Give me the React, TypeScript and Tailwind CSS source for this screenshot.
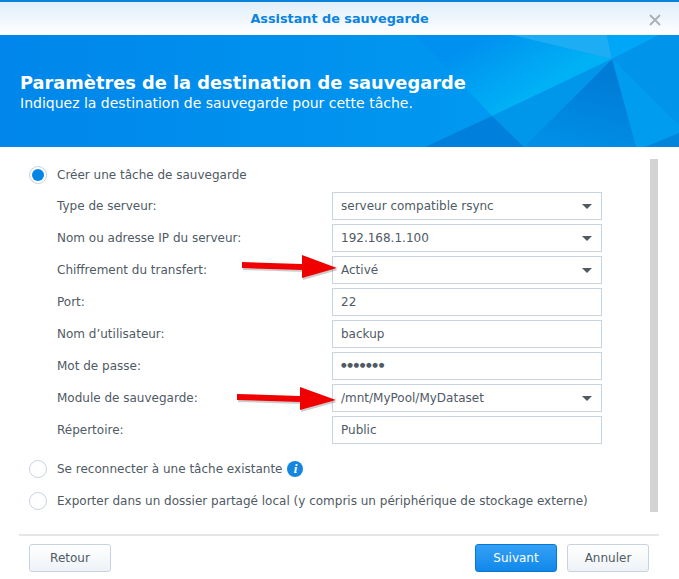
const font = { fontFamily: '"DejaVu Sans", sans-serif' };

const Radio = ({ checked = false }: { checked?: boolean }) => (
  <span className="flex h-[18px] w-[18px] shrink-0 items-center justify-center rounded-full border border-[#c8d3e0] bg-white">
    {checked && <span className="h-3 w-3 rounded-full bg-[#0086e5]" />}
  </span>
);

const Field = ({ label, value, select = false, password = false }: { label: string; value: string; select?: boolean; password?: boolean }) => (
  <div className="flex h-7 items-center">
    <span className="w-[275px] shrink-0 text-[#505a64]">{label}</span>
    <div className="flex h-7 w-[270px] items-center justify-between border border-[#c7d3e0] bg-white pl-2 pr-[9px] text-[#505a64]">
      <span className={password ? 'text-[6.5px] tracking-[0.6px]' : ''}>{value}</span>
      {select && <span className="h-0 w-0 border-x-[5px] border-t-[5px] border-x-transparent border-t-[#505a64]" />}
    </div>
  </div>
);

// base = x of the head's back edge, tip = x of the point
const Arrow = ({ className, base, tip }: { className: string; base: number; tip: number }) => {
  const d = `M0 8 L${base} 10 L${base} 1 L${tip} 14 L${base} 24 L${base} 16 L0 14 Z`;
  return (
    <svg className={className} width="105" height="30" viewBox="0 0 105 30">
      <path d={d} fill="#000" opacity="0.2" transform="translate(1 2)" />
      <path d={d} fill="#f00000" />
    </svg>
  );
};

const HeaderArt = () => (
  <svg className="absolute inset-0" width="679" height="112" viewBox="0 35 679 112">
    <defs>
      <linearGradient id="base" x1="0" x2="1" y1="0" y2="0">
        <stop offset="0" stopColor="#0086ea" />
        <stop offset="0.7" stopColor="#0098f0" />
      </linearGradient>
      <linearGradient id="band" gradientUnits="userSpaceOnUse" x1="465" y1="45" x2="505" y2="112">
        <stop offset="0" stopColor="#0090f0" />
        <stop offset="1" stopColor="#00b2f5" />
      </linearGradient>
      <linearGradient id="dark" gradientUnits="userSpaceOnUse" x1="600" y1="75" x2="580" y2="147">
        <stop offset="0" stopColor="#007cd6" />
        <stop offset="1" stopColor="#008ee6" />
      </linearGradient>
    </defs>
    <rect x="0" y="35" width="679" height="112" fill="url(#base)" />
    <polygon points="415,35 512,35 612,59 492,116" fill="url(#band)" />
    <polygon points="512,35 607,35 612,59" fill="#1cadf5" />
    <polygon points="607,35 659,35 612,59" fill="#00a6f8" />
    <polygon points="659,35 679,35 679,125 612,59" fill="#0094ea" />
    <polygon points="612,59 679,125 679,133 645,147 636,147" fill="#009cf0" />
    <polygon points="612,59 636,147 524,147" fill="url(#dark)" />
    <polygon points="612,59 524,147 492,116" fill="#0096ea" />
    <polygon points="492,116 524,147 425,147" fill="#0080dc" />
    <polygon points="645,147 679,133 679,147" fill="#0085dc" />
  </svg>
);

export default function App() {
  return (
    <div className="flex h-[579px] w-[679px] flex-col overflow-hidden bg-white text-[12px]" style={font}>
      <div className="relative flex h-[35px] shrink-0 items-center justify-center border-t-2 border-[#0a82dc] bg-gradient-to-b from-[#dfeefa] to-white">
        <span className="text-[12.8px] font-bold text-[#0a84e0]">Assistant de sauvegarde</span>
        <svg className="absolute right-[17px] top-[11px]" width="14" height="14" viewBox="0 0 14 14">
          <path d="M2 2 L12 12 M12 2 L2 12" stroke="#a9b0b6" strokeWidth="1.8" />
        </svg>
      </div>

      <div className="relative h-[112px] shrink-0 overflow-hidden">
        <HeaderArt />
        <div className="relative pl-5 pr-2 pt-[38px] text-white">
          <div className="text-[17.8px] font-bold leading-[20px]">Paramètres de la destination de sauvegarde</div>
          <div className="text-[14px] leading-[20px]">Indiquez la destination de sauvegarde pour cette tâche.</div>
        </div>
      </div>

      <div className="relative flex flex-1 flex-col">
        <div className="flex h-[387px] pl-[29px] pr-[21px] pt-3">
          <div className="flex-1">
            <div className="mt-[7px] flex h-[18px] items-center gap-[10px] text-[#505a64]">
              <Radio checked />
              <span>Créer une tâche de sauvegarde</span>
            </div>
            <div className="mt-[8px] flex flex-col gap-1 pl-[28px]">
              <Field label="Type de serveur:" value="serveur compatible rsync" select />
              <Field label="Nom ou adresse IP du serveur:" value="192.168.1.100" select />
              <Field label="Chiffrement du transfert:" value="Activé" select />
              <Field label="Port:" value="22" />
              <Field label="Nom d’utilisateur:" value="backup" />
              <Field label="Mot de passe:" value="●●●●●●●" password />
              <Field label="Module de sauvegarde:" value="/mnt/MyPool/MyDataset" select />
              <Field label="Répertoire:" value="Public" />
            </div>
            <div className="mt-[16px] flex h-[18px] items-center gap-[10px] text-[#505a64]">
              <Radio />
              <span>Se reconnecter à une tâche existante</span>
              <span className="-ml-[5px] flex h-4 w-4 items-center justify-center rounded-full bg-[#1585e0] font-['Liberation_Serif',serif] text-[13px] font-bold italic text-white">i</span>
            </div>
            <div className="mt-[14px] flex h-[18px] items-center gap-[10px] text-[#505a64]">
              <Radio />
              <span>Exporter dans un dossier partagé local (y compris un périphérique de stockage externe)</span>
            </div>
          </div>
          <div className="h-[353px] w-2 shrink-0 bg-[#d3d3d5]" />
        </div>

        <div className="mx-[19px] mr-5 h-[2px] bg-[#e6e6e6]" />

        <div className="flex items-center justify-between pl-[29px] pr-[30px] pt-[8px]">
          <button className="h-7 w-[82px] rounded-[3px] border border-[#c7d3e0] bg-gradient-to-b from-white to-[#eef2f7] text-[#505a64]">Retour</button>
          <div className="flex gap-[10px]">
            <button className="h-7 w-[82px] rounded-[3px] border border-[#0a78d2] bg-gradient-to-b from-[#33a0f5] to-[#0f88ea] text-white">Suivant</button>
            <button className="h-7 w-[82px] rounded-[3px] border border-[#c7d3e0] bg-gradient-to-b from-white to-[#eef2f7] text-[#505a64]">Annuler</button>
          </div>
        </div>

        <Arrow className="absolute left-[242px] top-[107px]" base={60} tip={95} />
        <Arrow className="absolute left-[237px] top-[239px]" base={63} tip={99} />
      </div>
    </div>
  );
}
